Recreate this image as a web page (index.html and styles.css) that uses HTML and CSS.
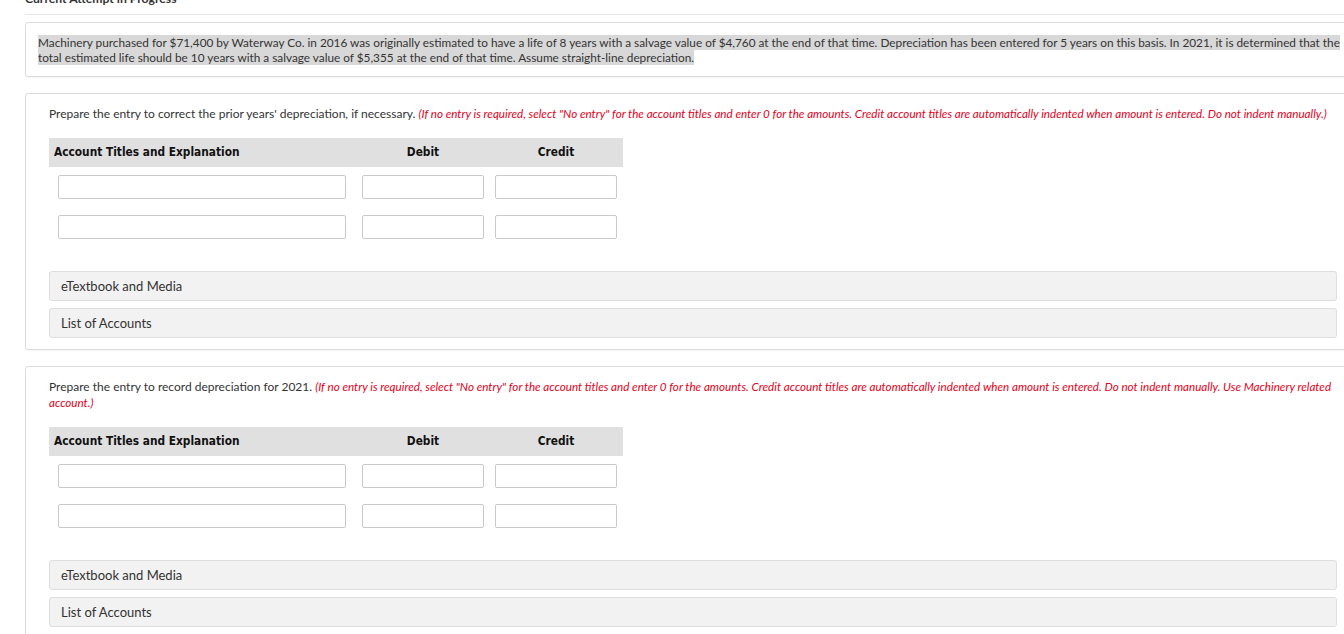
FILE: index.html
```html
<!DOCTYPE html>
<html lang="en">
<head>
<meta charset="utf-8">
<title>Current Attempt in Progress</title>
<link rel="stylesheet" href="styles.css">
</head>
<body>
<div class="page">
  <h2 class="attempt-title">Current Attempt in Progress</h2>

  <div class="card problem">
    <p class="problem-text"><span class="hl">Machinery purchased for $71,400 by Waterway Co. in 2016 was originally estimated to have a life of 8 years with a salvage value of $4,760 at the end of that time. Depreciation has been entered for 5 years on this basis. In 2021, it is determined that the total estimated life should be 10 years with a salvage value of $5,355 at the end of that time. Assume straight-line depreciation.</span></p>
  </div>

  <div class="card part">
    <p class="prompt">Prepare the entry to correct the prior years' depreciation, if necessary. <em class="hint">(If no entry is required, select "No entry" for the account titles and enter 0 for the amounts. Credit account titles are automatically indented when amount is entered. Do not indent manually.)</em></p>
    <div class="journal">
      <div class="jrow jhead">
        <div class="jcell c-title"><span class="head-title">Account Titles and Explanation</span></div>
        <div class="jcell c-amt">Debit</div>
        <div class="jcell c-amt">Credit</div>
      </div>
      <div class="jrow jentry">
        <div class="jcell c-title"><input class="field f-title" type="text"></div>
        <div class="jcell c-amt"><input class="field f-amt" type="text"></div>
        <div class="jcell c-amt"><input class="field f-amt" type="text"></div>
      </div>
      <div class="jrow jentry">
        <div class="jcell c-title"><input class="field f-title" type="text"></div>
        <div class="jcell c-amt"><input class="field f-amt" type="text"></div>
        <div class="jcell c-amt"><input class="field f-amt" type="text"></div>
      </div>
    </div>
    <div class="resources">
      <div class="res-bar">eTextbook and Media</div>
      <div class="res-bar">List of Accounts</div>
    </div>
  </div>

  <div class="card part">
    <p class="prompt">Prepare the entry to record depreciation for 2021. <em class="hint">(If no entry is required, select "No entry" for the account titles and enter 0 for the amounts. Credit account titles are automatically indented when amount is entered. Do not indent manually. Use Machinery related account.)</em></p>
    <div class="journal">
      <div class="jrow jhead">
        <div class="jcell c-title"><span class="head-title">Account Titles and Explanation</span></div>
        <div class="jcell c-amt">Debit</div>
        <div class="jcell c-amt">Credit</div>
      </div>
      <div class="jrow jentry">
        <div class="jcell c-title"><input class="field f-title" type="text"></div>
        <div class="jcell c-amt"><input class="field f-amt" type="text"></div>
        <div class="jcell c-amt"><input class="field f-amt" type="text"></div>
      </div>
      <div class="jrow jentry">
        <div class="jcell c-title"><input class="field f-title" type="text"></div>
        <div class="jcell c-amt"><input class="field f-amt" type="text"></div>
        <div class="jcell c-amt"><input class="field f-amt" type="text"></div>
      </div>
    </div>
    <div class="resources">
      <div class="res-bar">eTextbook and Media</div>
      <div class="res-bar">List of Accounts</div>
    </div>
  </div>
</div>
</body>
</html>
```
FILE: styles.css
```css
html, body {
  margin: 0;
  padding: 0;
  overflow: hidden;
  background: #ffffff;
}

body {
  font-family: Lato, "Open Sans", "Liberation Sans", sans-serif;
  color: #333333;
}

.page {
  width: 1336px;
  padding-left: 25px;
}

.attempt-title {
  margin: -11px 0 0;
  font-size: 12.2px;
  line-height: 20px;
  font-weight: 700;
  color: #333333;
  padding-bottom: 5px;
  border-bottom: 1px solid #e6e6e6;
}

.card {
  border: 1px solid #dcdcdc;
  border-radius: 3px;
  background: #ffffff;
  box-shadow: 0 1px 1px rgba(0, 0, 0, 0.04);
}

.problem {
  margin-top: 7px;
  padding: 12px 12px 11px;
}

.problem-text {
  margin: 0;
  font-size: 11.8px;
  line-height: 15px;
  color: #333333;
}

.hl {
  background: #d8d8d8;
}

.part {
  margin-top: 16px;
  padding: 12px 23px 11px;
}

.prompt {
  margin: 0;
  font-size: 12px;
  line-height: 16px;
  color: #333333;
}

.hint {
  color: #e4001b;
  font-style: italic;
  font-size: 11.65px;
}

.journal {
  margin-top: 16px;
  width: 574px;
}

.jrow {
  display: grid;
  grid-template-columns: 304px 133px 137px;
  padding-left: 9px;
}

.jhead {
  background: #e0e0e0;
  height: 29px;
  line-height: 29px;
  font-family: "DejaVu Sans Condensed", "DejaVu Sans", Verdana, sans-serif;
  font-weight: 700;
  font-size: 11.8px;
  color: #111111;
}

.jhead .c-amt {
  width: 122px;
  text-align: center;
}

.head-title {
  margin-left: -4px;
}

.jentry {
  margin-top: 8px;
}

.jentry + .jentry {
  margin-top: 16px;
}

.field {
  display: block;
  box-sizing: border-box;
  height: 24px;
  margin: 0;
  padding: 2px 4px;
  border: 1px solid #c9c9c9;
  border-radius: 2px;
  background: #ffffff;
  font-family: Lato, sans-serif;
  font-size: 12px;
}

.f-title {
  width: 288px;
}

.f-amt {
  width: 122px;
}

.resources {
  margin-top: 32px;
  display: flex;
  flex-direction: column;
  gap: 7px;
}

.res-bar {
  height: 28px;
  line-height: 28px;
  padding-left: 11px;
  background: #f2f2f2;
  border: 1px solid #dedede;
  border-radius: 3px;
  font-size: 13px;
  color: #333333;
}
```
